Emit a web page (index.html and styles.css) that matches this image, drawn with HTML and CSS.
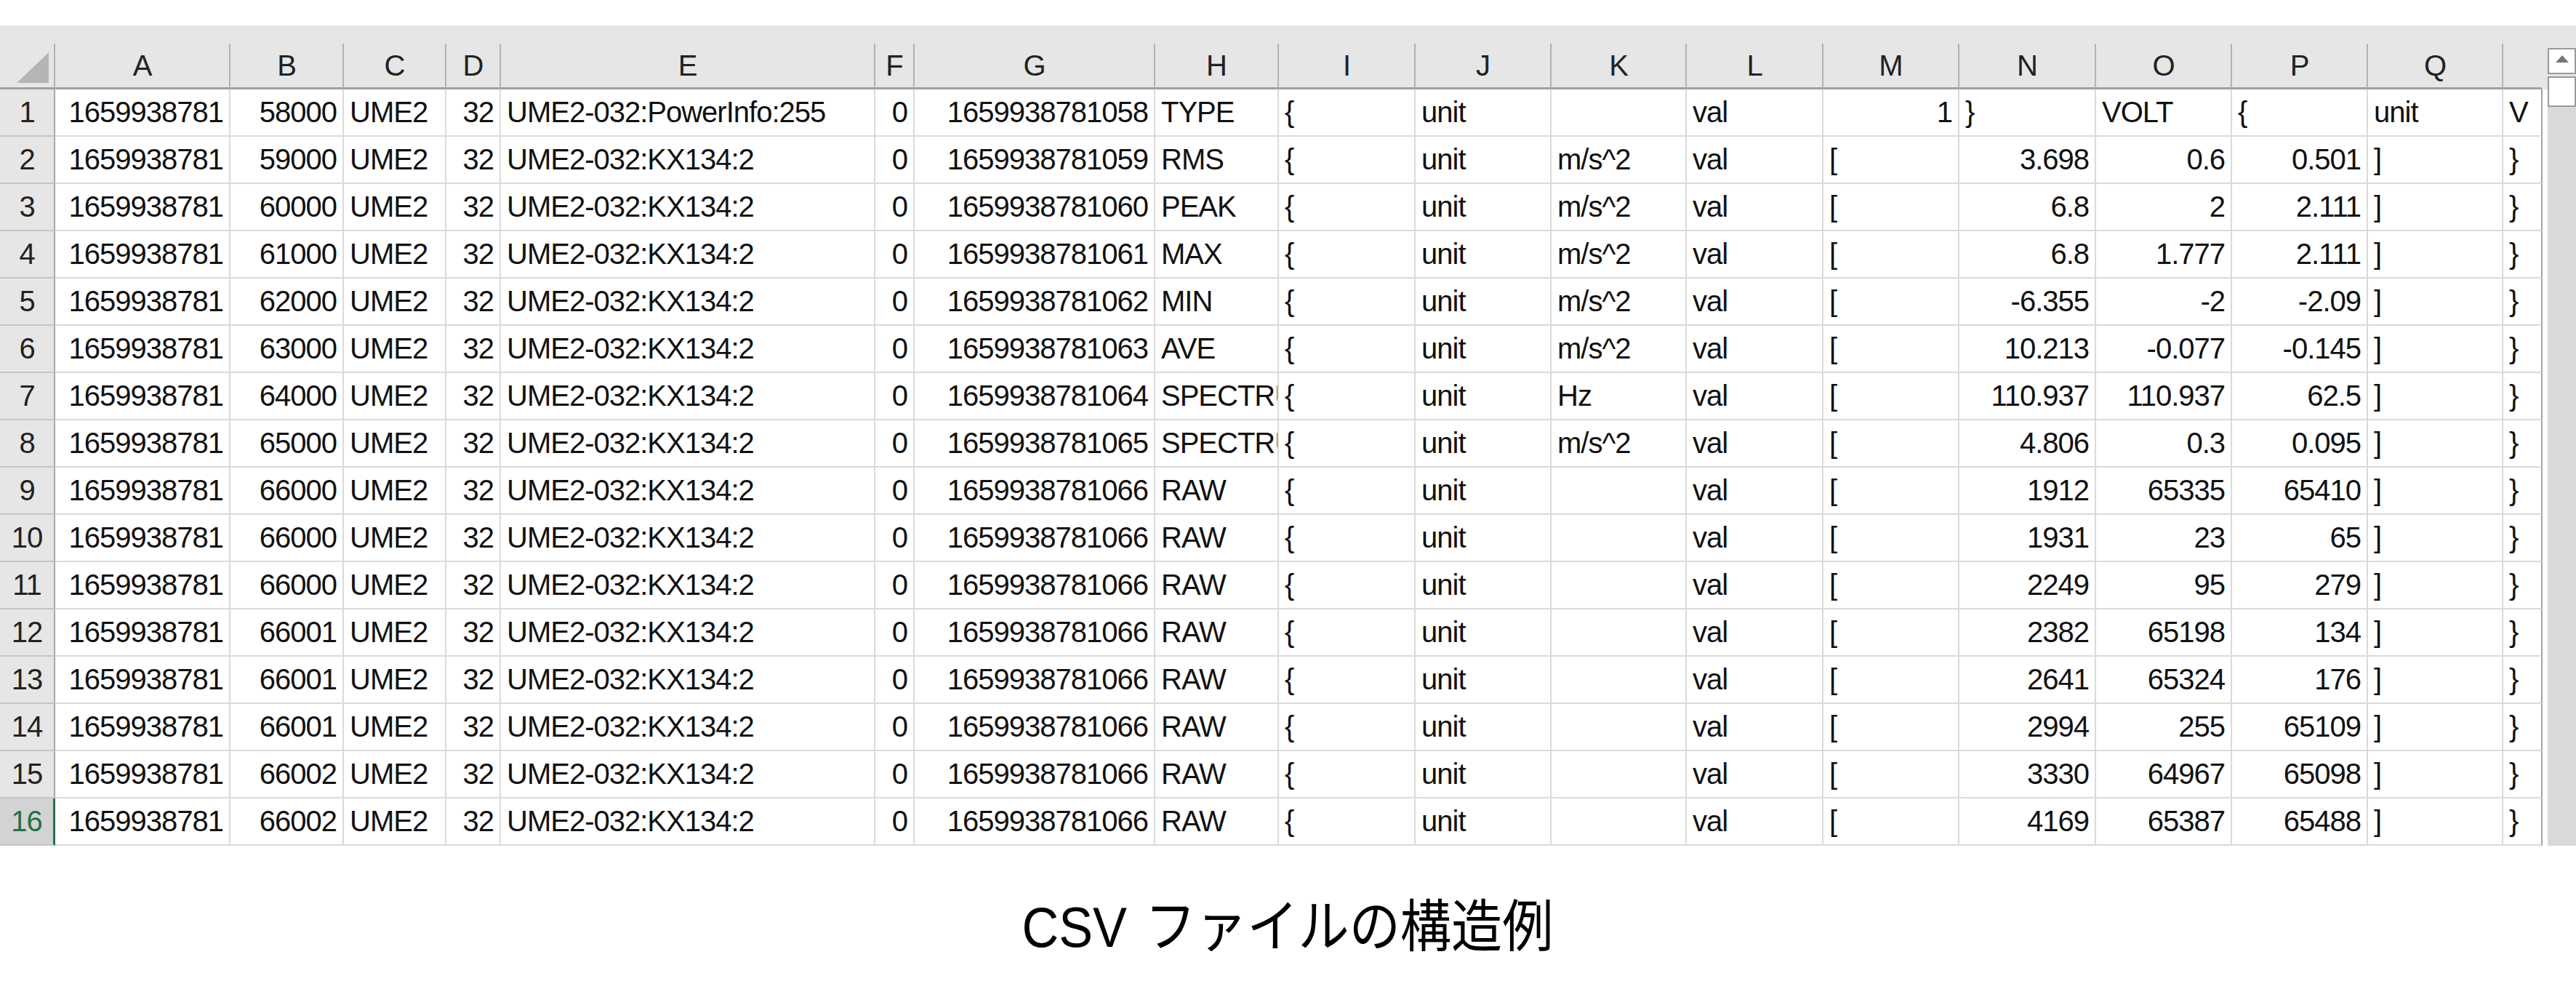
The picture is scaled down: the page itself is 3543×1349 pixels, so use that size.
FILE: index.html
```html
<!DOCTYPE html>
<html lang="ja">
<head>
    <meta charset="UTF-8">
    <meta name="viewport" content="width=device-width, initial-scale=1.0">
    <title>CSV ファイルの構造例</title>
    <link rel="stylesheet" href="styles.css">
</head>
<body>

<div class="excel">
    <div class="topstrip"></div>
    <div class="panes">
        <div class="sheet">
            <div class="row head">
                <div class="cell corner"><span class="tri"></span></div>
                <div class="cell">A</div><div class="cell">B</div><div class="cell">C</div><div class="cell">D</div>
                <div class="cell">E</div><div class="cell">F</div><div class="cell">G</div><div class="cell">H</div>
                <div class="cell">I</div><div class="cell">J</div><div class="cell">K</div><div class="cell">L</div>
                <div class="cell">M</div><div class="cell">N</div><div class="cell">O</div><div class="cell">P</div>
                <div class="cell">Q</div><div class="cell last"></div>
            </div>

            <div class="row">
                <div class="cell rh">1</div>
                <div class="cell num">1659938781</div><div class="cell num">58000</div><div class="cell">UME2</div><div class="cell num">32</div>
                <div class="cell">UME2-032:PowerInfo:255</div><div class="cell num">0</div><div class="cell num">1659938781058</div><div class="cell">TYPE</div>
                <div class="cell">{</div><div class="cell">unit</div><div class="cell"></div><div class="cell">val</div>
                <div class="cell num">1</div><div class="cell">}</div><div class="cell">VOLT</div><div class="cell">{</div>
                <div class="cell">unit</div><div class="cell last">V</div>
            </div>
            <div class="row">
                <div class="cell rh">2</div>
                <div class="cell num">1659938781</div><div class="cell num">59000</div><div class="cell">UME2</div><div class="cell num">32</div>
                <div class="cell">UME2-032:KX134:2</div><div class="cell num">0</div><div class="cell num">1659938781059</div><div class="cell">RMS</div>
                <div class="cell">{</div><div class="cell">unit</div><div class="cell">m/s^2</div><div class="cell">val</div>
                <div class="cell">[</div><div class="cell num">3.698</div><div class="cell num">0.6</div><div class="cell num">0.501</div>
                <div class="cell">]</div><div class="cell last">}</div>
            </div>
            <div class="row">
                <div class="cell rh">3</div>
                <div class="cell num">1659938781</div><div class="cell num">60000</div><div class="cell">UME2</div><div class="cell num">32</div>
                <div class="cell">UME2-032:KX134:2</div><div class="cell num">0</div><div class="cell num">1659938781060</div><div class="cell">PEAK</div>
                <div class="cell">{</div><div class="cell">unit</div><div class="cell">m/s^2</div><div class="cell">val</div>
                <div class="cell">[</div><div class="cell num">6.8</div><div class="cell num">2</div><div class="cell num">2.111</div>
                <div class="cell">]</div><div class="cell last">}</div>
            </div>
            <div class="row">
                <div class="cell rh">4</div>
                <div class="cell num">1659938781</div><div class="cell num">61000</div><div class="cell">UME2</div><div class="cell num">32</div>
                <div class="cell">UME2-032:KX134:2</div><div class="cell num">0</div><div class="cell num">1659938781061</div><div class="cell">MAX</div>
                <div class="cell">{</div><div class="cell">unit</div><div class="cell">m/s^2</div><div class="cell">val</div>
                <div class="cell">[</div><div class="cell num">6.8</div><div class="cell num">1.777</div><div class="cell num">2.111</div>
                <div class="cell">]</div><div class="cell last">}</div>
            </div>
            <div class="row">
                <div class="cell rh">5</div>
                <div class="cell num">1659938781</div><div class="cell num">62000</div><div class="cell">UME2</div><div class="cell num">32</div>
                <div class="cell">UME2-032:KX134:2</div><div class="cell num">0</div><div class="cell num">1659938781062</div><div class="cell">MIN</div>
                <div class="cell">{</div><div class="cell">unit</div><div class="cell">m/s^2</div><div class="cell">val</div>
                <div class="cell">[</div><div class="cell num">-6.355</div><div class="cell num">-2</div><div class="cell num">-2.09</div>
                <div class="cell">]</div><div class="cell last">}</div>
            </div>
            <div class="row">
                <div class="cell rh">6</div>
                <div class="cell num">1659938781</div><div class="cell num">63000</div><div class="cell">UME2</div><div class="cell num">32</div>
                <div class="cell">UME2-032:KX134:2</div><div class="cell num">0</div><div class="cell num">1659938781063</div><div class="cell">AVE</div>
                <div class="cell">{</div><div class="cell">unit</div><div class="cell">m/s^2</div><div class="cell">val</div>
                <div class="cell">[</div><div class="cell num">10.213</div><div class="cell num">-0.077</div><div class="cell num">-0.145</div>
                <div class="cell">]</div><div class="cell last">}</div>
            </div>
            <div class="row">
                <div class="cell rh">7</div>
                <div class="cell num">1659938781</div><div class="cell num">64000</div><div class="cell">UME2</div><div class="cell num">32</div>
                <div class="cell">UME2-032:KX134:2</div><div class="cell num">0</div><div class="cell num">1659938781064</div><div class="cell">SPECTRUM</div>
                <div class="cell">{</div><div class="cell">unit</div><div class="cell">Hz</div><div class="cell">val</div>
                <div class="cell">[</div><div class="cell num">110.937</div><div class="cell num">110.937</div><div class="cell num">62.5</div>
                <div class="cell">]</div><div class="cell last">}</div>
            </div>
            <div class="row">
                <div class="cell rh">8</div>
                <div class="cell num">1659938781</div><div class="cell num">65000</div><div class="cell">UME2</div><div class="cell num">32</div>
                <div class="cell">UME2-032:KX134:2</div><div class="cell num">0</div><div class="cell num">1659938781065</div><div class="cell">SPECTRUM</div>
                <div class="cell">{</div><div class="cell">unit</div><div class="cell">m/s^2</div><div class="cell">val</div>
                <div class="cell">[</div><div class="cell num">4.806</div><div class="cell num">0.3</div><div class="cell num">0.095</div>
                <div class="cell">]</div><div class="cell last">}</div>
            </div>
            <div class="row">
                <div class="cell rh">9</div>
                <div class="cell num">1659938781</div><div class="cell num">66000</div><div class="cell">UME2</div><div class="cell num">32</div>
                <div class="cell">UME2-032:KX134:2</div><div class="cell num">0</div><div class="cell num">1659938781066</div><div class="cell">RAW</div>
                <div class="cell">{</div><div class="cell">unit</div><div class="cell"></div><div class="cell">val</div>
                <div class="cell">[</div><div class="cell num">1912</div><div class="cell num">65335</div><div class="cell num">65410</div>
                <div class="cell">]</div><div class="cell last">}</div>
            </div>
            <div class="row">
                <div class="cell rh">10</div>
                <div class="cell num">1659938781</div><div class="cell num">66000</div><div class="cell">UME2</div><div class="cell num">32</div>
                <div class="cell">UME2-032:KX134:2</div><div class="cell num">0</div><div class="cell num">1659938781066</div><div class="cell">RAW</div>
                <div class="cell">{</div><div class="cell">unit</div><div class="cell"></div><div class="cell">val</div>
                <div class="cell">[</div><div class="cell num">1931</div><div class="cell num">23</div><div class="cell num">65</div>
                <div class="cell">]</div><div class="cell last">}</div>
            </div>
            <div class="row">
                <div class="cell rh">11</div>
                <div class="cell num">1659938781</div><div class="cell num">66000</div><div class="cell">UME2</div><div class="cell num">32</div>
                <div class="cell">UME2-032:KX134:2</div><div class="cell num">0</div><div class="cell num">1659938781066</div><div class="cell">RAW</div>
                <div class="cell">{</div><div class="cell">unit</div><div class="cell"></div><div class="cell">val</div>
                <div class="cell">[</div><div class="cell num">2249</div><div class="cell num">95</div><div class="cell num">279</div>
                <div class="cell">]</div><div class="cell last">}</div>
            </div>
            <div class="row">
                <div class="cell rh">12</div>
                <div class="cell num">1659938781</div><div class="cell num">66001</div><div class="cell">UME2</div><div class="cell num">32</div>
                <div class="cell">UME2-032:KX134:2</div><div class="cell num">0</div><div class="cell num">1659938781066</div><div class="cell">RAW</div>
                <div class="cell">{</div><div class="cell">unit</div><div class="cell"></div><div class="cell">val</div>
                <div class="cell">[</div><div class="cell num">2382</div><div class="cell num">65198</div><div class="cell num">134</div>
                <div class="cell">]</div><div class="cell last">}</div>
            </div>
            <div class="row">
                <div class="cell rh">13</div>
                <div class="cell num">1659938781</div><div class="cell num">66001</div><div class="cell">UME2</div><div class="cell num">32</div>
                <div class="cell">UME2-032:KX134:2</div><div class="cell num">0</div><div class="cell num">1659938781066</div><div class="cell">RAW</div>
                <div class="cell">{</div><div class="cell">unit</div><div class="cell"></div><div class="cell">val</div>
                <div class="cell">[</div><div class="cell num">2641</div><div class="cell num">65324</div><div class="cell num">176</div>
                <div class="cell">]</div><div class="cell last">}</div>
            </div>
            <div class="row">
                <div class="cell rh">14</div>
                <div class="cell num">1659938781</div><div class="cell num">66001</div><div class="cell">UME2</div><div class="cell num">32</div>
                <div class="cell">UME2-032:KX134:2</div><div class="cell num">0</div><div class="cell num">1659938781066</div><div class="cell">RAW</div>
                <div class="cell">{</div><div class="cell">unit</div><div class="cell"></div><div class="cell">val</div>
                <div class="cell">[</div><div class="cell num">2994</div><div class="cell num">255</div><div class="cell num">65109</div>
                <div class="cell">]</div><div class="cell last">}</div>
            </div>
            <div class="row">
                <div class="cell rh">15</div>
                <div class="cell num">1659938781</div><div class="cell num">66002</div><div class="cell">UME2</div><div class="cell num">32</div>
                <div class="cell">UME2-032:KX134:2</div><div class="cell num">0</div><div class="cell num">1659938781066</div><div class="cell">RAW</div>
                <div class="cell">{</div><div class="cell">unit</div><div class="cell"></div><div class="cell">val</div>
                <div class="cell">[</div><div class="cell num">3330</div><div class="cell num">64967</div><div class="cell num">65098</div>
                <div class="cell">]</div><div class="cell last">}</div>
            </div>
            <div class="row">
                <div class="cell rh active">16</div>
                <div class="cell num">1659938781</div><div class="cell num">66002</div><div class="cell">UME2</div><div class="cell num">32</div>
                <div class="cell">UME2-032:KX134:2</div><div class="cell num">0</div><div class="cell num">1659938781066</div><div class="cell">RAW</div>
                <div class="cell">{</div><div class="cell">unit</div><div class="cell"></div><div class="cell">val</div>
                <div class="cell">[</div><div class="cell num">4169</div><div class="cell num">65387</div><div class="cell num">65488</div>
                <div class="cell">]</div><div class="cell last">}</div>
            </div>
        </div>

        <div class="vscroll">
            <div class="sb-btn">
                <svg width="18" height="10" viewBox="0 0 18 10"><polygon points="9,0 18,10 0,10" fill="#767676"/></svg>
            </div>
            <div class="sb-thumb"></div>
        </div>
    </div>
</div>

<p class="caption"><span>CSV ファイルの構造例</span></p>

</body>
</html>
```

FILE: styles.css
```css
body {
    margin: 0;
    background-color: #fff;
    color: #111;
    font-family: 'Liberation Sans', Arial, sans-serif;
}

.excel {
    margin-top: 35px;
}

.topstrip {
    height: 25px;
    background-color: #e6e6e6;
}

.panes {
    display: flex;
    background: linear-gradient(#e6e6e6 0, #e6e6e6 63px, #fff 63px);
}

/* column widths, row header first */
.sheet {
    width: 3497px;
    font-size: 40px;
    letter-spacing: -1px;
}

.row {
    display: grid;
    grid-template-columns: 76px 241px 156px 141px 75px 515px 54px 331px 170px 188px 187px 186px 188px 187px 188px 187px 187px 186px 54px;
    height: 65px;
}

.cell {
    box-sizing: border-box;
    border-right: 2px solid #dadada;
    border-bottom: 2px solid #dadada;
    padding: 0 8px;
    line-height: 63px;
    white-space: nowrap;
    overflow: hidden;
}

.num {
    text-align: right;
}

.cell.last {
    border-right-color: #a3a3a3;
}

.head {
    height: 63px;
}

.head .cell {
    background-color: #e6e6e6;
    border-right-color: #b3b3b3;
    border-bottom: 3px solid #a0a0a0;
    text-align: center;
    line-height: 60px;
    color: #222;
}

.head .cell.last {
    border-right-color: transparent;
}

.corner {
    position: relative;
}

.tri {
    position: absolute;
    right: 7px;
    bottom: 6px;
    width: 44px;
    height: 42px;
    background-color: #b5b5b5;
    clip-path: polygon(100% 0, 100% 100%, 0 100%);
}

.rh {
    background-color: #e6e6e6;
    border-right-color: #a8a8a8;
    border-bottom-color: #c6c6c6;
    text-align: center;
    padding: 0;
    color: #222;
}

.rh.active {
    background-color: #d3d3d3;
    border-right: 3px solid #217346;
    color: #217346;
}

.vscroll {
    width: 39px;
    margin-left: 7px;
    padding-top: 6px;
    background: linear-gradient(#e6e6e6 0, #e6e6e6 63px, #d9d9d9 63px);
}

.sb-btn, .sb-thumb {
    box-sizing: border-box;
    background-color: #fff;
    border: 2px solid #9a9a9a;
}

.sb-btn {
    height: 36px;
    display: flex;
    align-items: center;
    justify-content: center;
}

.sb-btn svg {
    margin-top: -6px;
}

.sb-thumb {
    height: 42px;
    margin-top: 3px;
}

.caption {
    margin: 73px 0 0;
    text-align: center;
    font-family: 'Liberation Sans', 'Noto Sans CJK JP', sans-serif;
    font-size: 78px;
    line-height: 78px;
    color: #000;
}

.caption span {
    display: inline-block;
    transform: scaleX(0.9);
    word-spacing: 6px;
}
```
